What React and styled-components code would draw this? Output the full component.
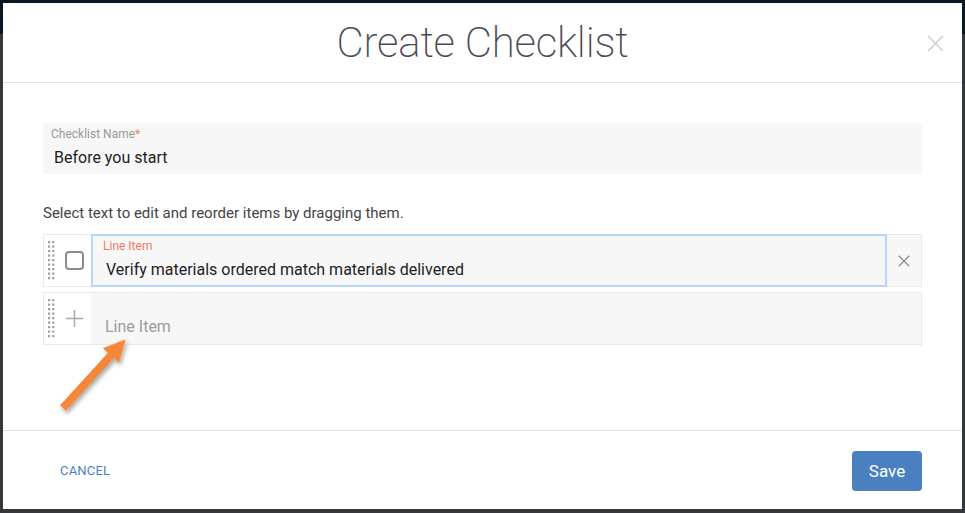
import React, { useState } from "react";
import styled, { createGlobalStyle } from "styled-components";

const GlobalStyle = createGlobalStyle`
  html, body {
    margin: 0;
    padding: 0;
    background: #34383b;
    font-family: Roboto, "Liberation Sans", Arial, sans-serif;
  }
`;

function DragHandle() {
  const dots = [];
  for (let i = 0; i < 9; i++) {
    dots.push(<rect key={"a" + i} x="0" y={i * 4.5} width="2.2" height="2.2" />);
    dots.push(<rect key={"b" + i} x="4.2" y={i * 4.5} width="2.2" height="2.2" />);
  }
  return (
    <HandleCell>
      <svg width="7" height="39" viewBox="0 0 7 39" fill="#a0a0a0">
        {dots}
      </svg>
    </HandleCell>
  );
}

function CrossIcon({ size, color, width }) {
  return (
    <svg width={size} height={size} viewBox="0 0 16 16" stroke={color} strokeWidth={width} fill="none">
      <path d="M1 1 L15 15 M15 1 L1 15" />
    </svg>
  );
}

function App() {
  const [name, setName] = useState("Before you start");
  const [item, setItem] = useState("Verify materials ordered match materials delivered");

  return (
    <Page>
      <GlobalStyle />
      <Modal>
        <Header>
          <Title>Create Checklist</Title>
          <CloseButton aria-label="close">
            <CrossIcon size={17} color="#cfcfcf" width={1.4} />
          </CloseButton>
        </Header>

        <Body>
          <NameField>
            <FieldLabel>
              Checklist Name<Star>*</Star>
            </FieldLabel>
            <NameInput value={name} onChange={(e) => setName(e.target.value)} />
          </NameField>

          <Hint>Select text to edit and reorder items by dragging them.</Hint>

          <ItemList>
            <ItemRow>
              <DragHandle />
              <CheckCell>
                <Checkbox />
              </CheckCell>
              <ItemField $focused>
                <ItemLabel>Line Item</ItemLabel>
                <ItemInput value={item} onChange={(e) => setItem(e.target.value)} />
              </ItemField>
              <DeleteCell>
                <CrossIcon size={12} color="#8a8a8a" width={1.6} />
              </DeleteCell>
            </ItemRow>

            <ItemRow>
              <DragHandle />
              <CheckCell>
                <svg width="17" height="17" viewBox="0 0 17 17" stroke="#a8a8a8" strokeWidth="1.5">
                  <path d="M8.5 0 V17 M0 8.5 H17" />
                </svg>
              </CheckCell>
              <ItemField>
                <Placeholder>Line Item</Placeholder>
              </ItemField>
            </ItemRow>
          </ItemList>
        </Body>

        <Footer>
          <CancelButton>CANCEL</CancelButton>
          <SaveButton>Save</SaveButton>
        </Footer>
      </Modal>

      <Arrow width="965" height="513" viewBox="0 0 965 513">
        <defs>
          <filter id="shadow" x="-20%" y="-20%" width="140%" height="140%">
            <feDropShadow dx="-1" dy="3" stdDeviation="2" floodColor="#000" floodOpacity="0.35" />
          </filter>
        </defs>
        <g transform="translate(63 408) rotate(-47.6)" filter="url(#shadow)">
          <polygon points="0,-4 71,-4 71,-11 93,0 71,11 71,4 0,4" fill="#f5873a" />
        </g>
      </Arrow>
    </Page>
  );
}

const Page = styled.div`
  position: relative;
  width: 965px;
  height: 513px;
  padding: 3px 3px 4px 3px;
  box-sizing: border-box;
  background: #34383b;
  overflow: hidden;

  &::before {
    content: "";
    position: absolute;
    left: 0;
    right: 0;
    top: 0;
    height: 34px;
    background: #0b1620;
  }
`;

const Modal = styled.div`
  position: relative;
  z-index: 1;
  width: 959px;
  height: 506px;
  background: #fff;
  display: flex;
  flex-direction: column;
`;

const Header = styled.div`
  position: relative;
  height: 79px;
  border-bottom: 1px solid #e0e0e0;
  display: flex;
  align-items: center;
  justify-content: center;
`;

const Title = styled.h1`
  margin: 0;
  font-family: Roboto, "Liberation Sans", sans-serif;
  font-weight: 200;
  font-size: 42px;
  color: #4a4a55;
  letter-spacing: -0.2px;
`;

const CloseButton = styled.button`
  position: absolute;
  right: 18px;
  top: 32px;
  border: none;
  background: none;
  padding: 0;
  cursor: pointer;
  line-height: 0;
`;

const Body = styled.div`
  flex: 1;
  padding: 40px 40px 0 40px;
  display: flex;
  flex-direction: column;
`;

const NameField = styled.div`
  background: #f7f7f7;
  height: 51px;
  box-sizing: border-box;
  padding: 4px 8px 0 8px;
  display: flex;
  flex-direction: column;
`;

const FieldLabel = styled.label`
  font-size: 12px;
  color: #999;
  line-height: 14px;
`;

const Star = styled.span`
  color: #f0806a;
`;

const NameInput = styled.input`
  border: none;
  background: transparent;
  outline: none;
  font-family: Roboto, "Liberation Sans", sans-serif;
  font-size: 16px;
  color: #222;
  padding: 0 0 0 3px;
  margin-top: 6px;
  height: 20px;
`;

const Hint = styled.p`
  margin: 30px 0 12px 0;
  font-size: 15px;
  line-height: 18px;
  color: #444;
`;

const ItemList = styled.div`
  display: flex;
  flex-direction: column;
  gap: 5px;
`;

const ItemRow = styled.div`
  display: flex;
  height: 53px;
  box-sizing: border-box;
  border: 1px solid #eaeaea;
  background: #fff;
`;

const HandleCell = styled.div`
  width: 14px;
  display: flex;
  align-items: center;
  justify-content: center;
  cursor: grab;
`;

const CheckCell = styled.div`
  width: 33px;
  display: flex;
  align-items: center;
  justify-content: center;
`;

const Checkbox = styled.span`
  width: 15px;
  height: 15px;
  border: 2px solid #8c8c8c;
  border-radius: 4px;
`;

const ItemField = styled.div`
  flex: 1;
  background: #f7f7f7;
  box-sizing: border-box;
  margin: ${(p) => (p.$focused ? "-1px 0" : "0")};
  border: 2px solid ${(p) => (p.$focused ? "#b7d6fa" : "transparent")};
  padding: 3px 8px 0 10px;
  display: flex;
  flex-direction: column;
  justify-content: ${(p) => (p.$focused ? "flex-start" : "center")};
`;

const ItemLabel = styled.label`
  font-size: 12px;
  line-height: 14px;
  color: #f07a62;
`;

const ItemInput = styled.input`
  border: none;
  background: transparent;
  outline: none;
  font-family: Roboto, "Liberation Sans", sans-serif;
  font-size: 16px;
  color: #222;
  padding: 0 0 0 3px;
  margin-top: 5px;
  height: 22px;
`;

const Placeholder = styled.span`
  font-size: 16px;
  color: #9c9c9c;
  padding: 12px 0 0 2px;
`;

const DeleteCell = styled.div`
  width: 34px;
  background: #f7f7f7;
  display: flex;
  align-items: center;
  justify-content: center;
  cursor: pointer;
`;

const Footer = styled.div`
  box-sizing: border-box;
  height: 79px;
  flex-shrink: 0;
  border-top: 1px solid #e0e0e0;
  display: flex;
  align-items: center;
  justify-content: space-between;
  padding: 1px 40px 0 57px;
`;

const CancelButton = styled.button`
  border: none;
  background: none;
  padding: 0;
  font-family: Roboto, "Liberation Sans", sans-serif;
  font-size: 13px;
  color: #4a7fc4;
  letter-spacing: 0.2px;
  cursor: pointer;
`;

const SaveButton = styled.button`
  width: 70px;
  height: 40px;
  border: none;
  border-radius: 4px;
  background: #4a80bf;
  color: #fff;
  font-family: Roboto, "Liberation Sans", sans-serif;
  font-size: 17px;
  cursor: pointer;
`;

const Arrow = styled.svg`
  position: absolute;
  left: 0;
  top: 0;
  z-index: 2;
  pointer-events: none;
`;

export default App;
